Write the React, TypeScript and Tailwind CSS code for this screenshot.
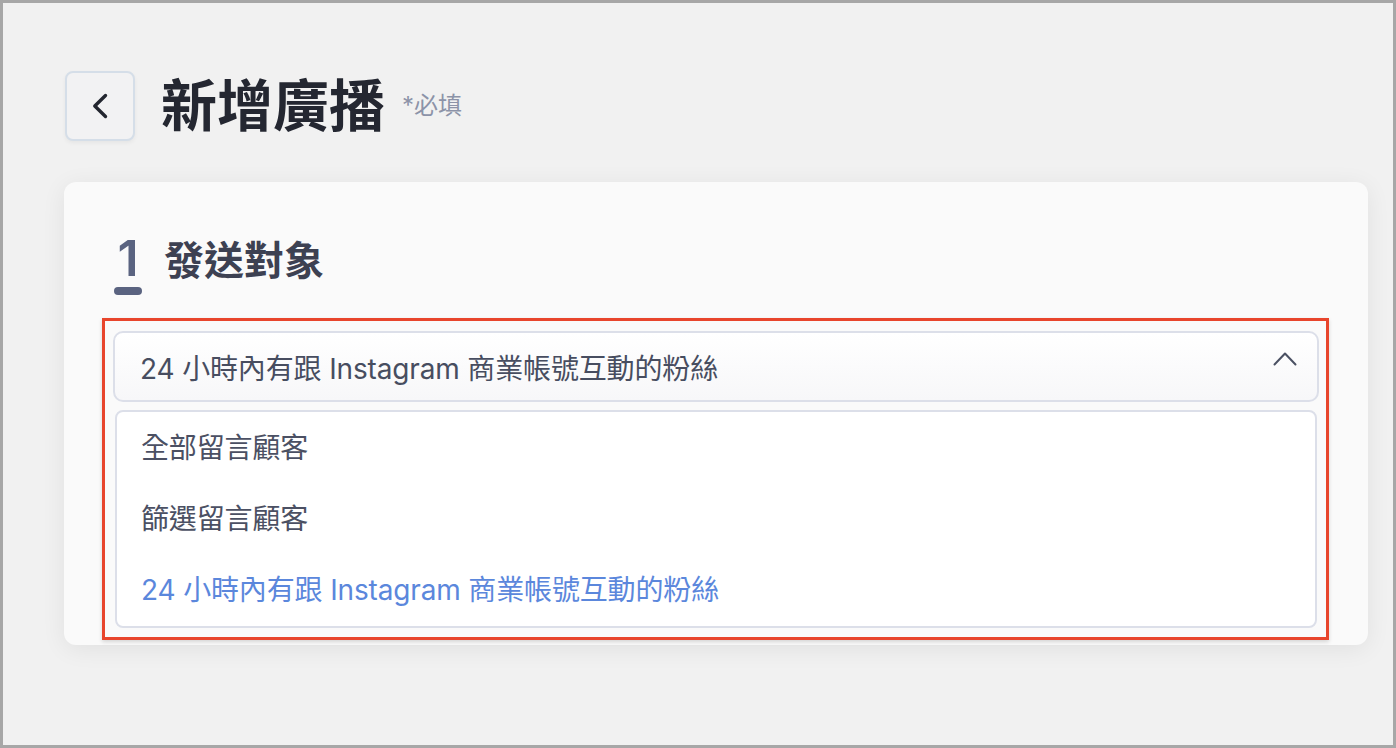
import React from "react";

const FONT = { fontFamily: 'Inter, "Noto Sans CJK TC", "Noto Sans", sans-serif' };

function BackChevron() {
  return (
    <svg width="16" height="26" viewBox="0 0 16 26" fill="none">
      <path
        d="M13.5 2.5 L2.8 13 L13.5 23.5"
        stroke="#23262f"
        strokeWidth="3.4"
        strokeLinecap="round"
        strokeLinejoin="round"
      />
    </svg>
  );
}

function ChevronUp() {
  return (
    <svg width="24" height="15" viewBox="0 0 24 15" fill="none">
      <path
        d="M1.5 13.5 L12 2.5 L22.5 13.5"
        stroke="#4b5163"
        strokeWidth="2"
        strokeLinecap="round"
        strokeLinejoin="round"
      />
    </svg>
  );
}

const options = [
  { label: "全部留言顧客", active: false, h: "h-[71px]" },
  { label: "篩選留言顧客", active: false, h: "h-[71px]" },
  { label: "24 小時內有跟 Instagram 商業帳號互動的粉絲", active: true, h: "h-[72px]" },
];

export default function App() {
  return (
    <div
      style={FONT}
      className="w-[1396px] h-[748px] overflow-hidden border-[3px] border-[#a7a7a7] bg-[#f1f1f1] pl-[61px] pt-[68px]"
    >
      {/* page header */}
      <div className="flex items-center h-[70px]">
        <button className="ml-px w-[70px] h-[70px] flex items-center justify-center rounded-lg border-2 border-[#d5dee8] bg-[#f2f2f3] shadow-[0_2px_4px_rgba(0,0,0,0.05)]">
          <BackChevron />
        </button>
        <h1 className="ml-[26px] text-[56px] leading-none font-bold text-[#242731]">新增廣播</h1>
        <span className="ml-[17px] text-[24px] leading-none text-[#8c93a8]">*必填</span>
      </div>

      {/* form card */}
      <div className="mt-[41px] w-[1304px] rounded-xl bg-[#fafafa] shadow-[0_4px_24px_rgba(0,0,0,0.07)] px-[49px] pt-[51px] pb-[5px]">
        <div className="flex items-start">
          <div className="flex flex-col items-center w-[28px] ml-px">
            <span className="text-[50px] leading-none font-semibold text-[#5a6380]">1</span>
            <span className="mt-[4px] w-[28px] h-[8px] rounded-full bg-[#5a6380]" />
          </div>
          <h2 className="ml-[22px] mt-[8px] text-[40px] leading-none font-bold text-[#3d4152]">發送對象</h2>
        </div>

        {/* highlighted select with open option list */}
        <div className="mt-[23px] ml-[-11px] mr-[-10px] border-[3px] border-[#e8452c] pt-[10px] pl-[8px] pr-[7px] pb-[9px] shadow-[0_2px_4px_rgba(0,0,0,0.15)]">
          <div className="h-[71px] flex items-center justify-between rounded-[10px] border-2 border-[#dcdfe9] bg-gradient-to-b from-white to-[#f7f7f9] pl-[25px] pr-[20px]">
            <span className="text-[28px] leading-none tracking-[-0.15px] text-[#474d60] mt-[5px]">
              24 小時內有跟 Instagram 商業帳號互動的粉絲
            </span>
            <span className="mb-[16px]">
              <ChevronUp />
            </span>
          </div>
          <ul className="mt-[8px] mx-[2px] rounded-lg border-2 border-[#dcdfe9] bg-white">
            {options.map((o) => (
              <li
                key={o.label}
                className={
                  o.h +
                  " flex items-center pl-[24px] text-[28px] leading-none tracking-[-0.15px] " +
                  (o.active ? "text-[#5b87dc]" : "text-[#4b5063]")
                }
              >
                {o.label}
              </li>
            ))}
          </ul>
        </div>
      </div>
    </div>
  );
}
